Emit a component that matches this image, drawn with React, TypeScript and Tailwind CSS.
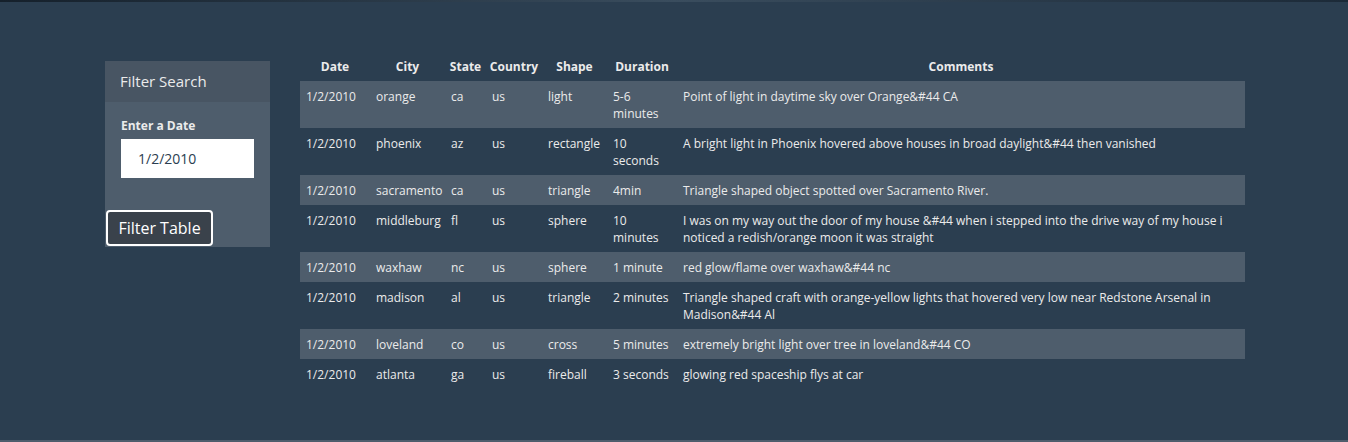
import React from 'react'

type Sighting = {
  datetime: string
  city: string
  state: string
  country: string
  shape: string
  duration: string
  comments: string
}

const sightings: Sighting[] = [
  { datetime: '1/2/2010', city: 'orange', state: 'ca', country: 'us', shape: 'light', duration: '5-6 minutes', comments: 'Point of light in daytime sky over Orange&#44 CA' },
  { datetime: '1/2/2010', city: 'phoenix', state: 'az', country: 'us', shape: 'rectangle', duration: '10 seconds', comments: 'A bright light in Phoenix hovered above houses in broad daylight&#44 then vanished' },
  { datetime: '1/2/2010', city: 'sacramento', state: 'ca', country: 'us', shape: 'triangle', duration: '4min', comments: 'Triangle shaped object spotted over Sacramento River.' },
  { datetime: '1/2/2010', city: 'middleburg', state: 'fl', country: 'us', shape: 'sphere', duration: '10 minutes', comments: 'I was on my way out the door of my house &#44 when i stepped into the drive way of my house i noticed a redish/orange moon it was straight' },
  { datetime: '1/2/2010', city: 'waxhaw', state: 'nc', country: 'us', shape: 'sphere', duration: '1 minute', comments: 'red glow/flame over waxhaw&#44 nc' },
  { datetime: '1/2/2010', city: 'madison', state: 'al', country: 'us', shape: 'triangle', duration: '2 minutes', comments: 'Triangle shaped craft with orange-yellow lights that hovered very low near Redstone Arsenal in Madison&#44 Al' },
  { datetime: '1/2/2010', city: 'loveland', state: 'co', country: 'us', shape: 'cross', duration: '5 minutes', comments: 'extremely bright light over tree in loveland&#44 CO' },
  { datetime: '1/2/2010', city: 'atlanta', state: 'ga', country: 'us', shape: 'fireball', duration: '3 seconds', comments: 'glowing red spaceship flys at car' },
]

const cell = 'px-[6px] pt-[7px] pb-[6px] align-top text-left font-normal'

export default function App() {
  return (
    <div className="h-[442px] bg-[#2b3e50] text-[#ebebeb] flex flex-col" style={{ fontFamily: '"Open Sans", "Liberation Sans", sans-serif' }}>
      {/* strip left over from the jumbotron image */}
      <div className="h-[2px] bg-gradient-to-r from-[#15202b] via-[#3a4d5e] to-[#1c2a38]" />

      <div className="flex-1 flex pl-[105px] pt-[53px]">
        {/* Filter panel */}
        <aside className="w-[165px] mt-[6px] self-start bg-[#4e5d6c]">
          <div className="h-[41px] bg-[#485563] px-[15px] flex items-center text-[15px]">Filter Search</div>
          <div className="pt-[16px] px-[16px]">
            <label className="block text-[12px] font-bold leading-[16px]">Enter a Date</label>
            <input
              className="mt-[5px] w-[133px] h-[39px] bg-white text-[#2b3e50] text-[14px] pl-[17px] outline-none"
              defaultValue="1/2/2010"
            />
          </div>
          <div className="pt-[32px] pl-[1px] pb-[1px]">
            <button className="w-[107px] h-[36px] rounded-[4px] border-2 border-white bg-[#3a424b] text-[16px] font-medium text-white">
              Filter Table
            </button>
          </div>
        </aside>

        {/* Sightings table */}
        <table className="ml-[30px] w-[945px] self-start table-fixed border-collapse text-[12px] leading-[17px]">
          <colgroup>
            <col className="w-[70px]" />
            <col className="w-[75px]" />
            <col className="w-[41px]" />
            <col className="w-[56px]" />
            <col className="w-[65px]" />
            <col className="w-[70px]" />
            <col />
          </colgroup>
          <thead>
            <tr className="h-[26px]">
              {['Date', 'City', 'State', 'Country', 'Shape', 'Duration', 'Comments'].map(h => (
                <th key={h} className="px-[2px] pb-[4px] text-center font-bold text-[12px] align-middle whitespace-nowrap">{h}</th>
              ))}
            </tr>
          </thead>
          <tbody>
            {sightings.map((s, i) => (
              <tr key={s.city} className={i % 2 === 0 ? 'bg-[#4e5d6c]' : ''}>
                <td className={cell}>{s.datetime}</td>
                <td className={cell}>{s.city}</td>
                <td className={cell}>{s.state}</td>
                <td className={cell}>{s.country}</td>
                <td className={cell}>{s.shape}</td>
                <td className={cell}>{s.duration}</td>
                <td className={cell}>{s.comments}</td>
              </tr>
            ))}
          </tbody>
        </table>
      </div>

      <div className="h-[2px] bg-[#4e5d6c]" />
    </div>
  )
}
